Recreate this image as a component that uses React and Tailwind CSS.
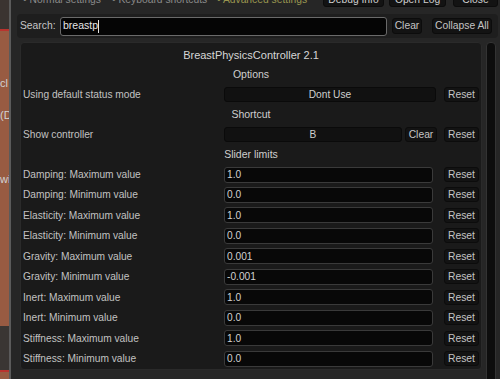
import React from "react";

const font = { fontFamily: '"Liberation Sans", Arial, sans-serif' };

const sliderRows = [
  ["Damping: Maximum value", "1.0"],
  ["Damping: Minimum value", "0.0"],
  ["Elasticity: Maximum value", "1.0"],
  ["Elasticity: Minimum value", "0.0"],
  ["Gravity: Maximum value", "0.001"],
  ["Gravity: Minimum value", "-0.001"],
  ["Inert: Maximum value", "1.0"],
  ["Inert: Minimum value", "0.0"],
  ["Stiffness: Maximum value", "1.0"],
  ["Stiffness: Minimum value", "0.0"],
];

function Btn({ children, className = "" }) {
  return (
    <div
      className={
        "flex items-center justify-center rounded-[3px] bg-[#131313] border border-[#0c0c0c] text-[#c4c4c4] text-[10.3px] whitespace-nowrap " +
        className
      }
    >
      {children}
    </div>
  );
}

function Heading({ children, h }) {
  return (
    <div className={"flex items-center justify-center text-[#cfcfcf] text-[10.5px] " + h}>
      {children}
    </div>
  );
}

export default function App() {
  return (
    <div className="w-[500px] h-[379px] flex overflow-hidden bg-[#232323]" style={font}>
      {/* background app peeking through on the left */}
      <div className="w-[9px] shrink-0 flex flex-col bg-[#985b42] overflow-hidden text-[11px] text-[#d2d2d2] leading-none">
        <div className="h-[29px] bg-[#3b3431]" />
        <div className="h-[2px] bg-[#b9332e]" />
        <div className="h-[47px]" />
        <div className="whitespace-nowrap">cl</div>
        <div className="h-[21px]" />
        <div className="whitespace-nowrap">(D</div>
        <div className="h-[53px]" />
        <div className="whitespace-nowrap">wi</div>
        <div className="flex-1" />
        <div className="h-[44px] bg-[#3a3633]" />
        <div className="h-[2px] bg-[#b9332e]" />
        <div className="h-[7px]" />
      </div>
      <div className="w-[2px] shrink-0 bg-[#5b5b5b]" />

      {/* settings window */}
      <div className="flex-1 flex flex-col bg-[#262626] min-w-0">
        {/* tabs row, cut off at the top */}
        <div className="h-[14px] flex items-start">
          <div className="-mt-[7px] flex items-center w-full text-[10.3px] leading-[14px] pl-[12px] pr-[2px]">
            <span className="text-[#8a8a8a] w-[89px] whitespace-nowrap">• Normal settings</span>
            <span className="text-[#8a8a8a] w-[105px] whitespace-nowrap">• Keyboard shortcuts</span>
            <span className="text-[#9a9650] whitespace-nowrap">• Advanced settings</span>
            <div className="flex-1" />
            <Btn className="w-[61px] h-[14px] mr-[5px] text-[#cfcfcf]">Debug Info</Btn>
            <Btn className="w-[57px] h-[14px] mr-[7px] text-[#cfcfcf]">Open Log</Btn>
            <Btn className="w-[45px] h-[14px] text-[#cfcfcf]">Close</Btn>
          </div>
        </div>

        {/* search row */}
        <div className="ml-[6px] mr-[2px] h-[24px] rounded-[4px] bg-[#1e1e1e] flex items-center pl-[3px] pr-[4px]">
          <span className="text-[#c6c6c6] text-[10.3px] w-[40px]">Search:</span>
          <div className="w-[327px] h-[19px] rounded-[3px] bg-[#050505] border border-[#6a6a6a] flex items-center pl-[2px] text-[10.5px] text-[#e6e6e6]">
            breastp<span className="w-px h-[13px] bg-[#e6e6e6]" />
          </div>
          <Btn className="ml-[5px] w-[30px] h-[16px]">Clear</Btn>
          <Btn className="ml-[10px] w-[60px] h-[16px]">Collapse All</Btn>
        </div>

        {/* content + scrollbar */}
        <div className="flex-1 flex pt-[4px] min-h-0">
          <div className="ml-[9px] w-[462px] h-[328px] rounded-[4px] bg-[#1a1a1a] border border-[#2a2a2a] flex flex-col pt-[2px] px-[2px] text-[10.2px] text-[#c2c2c2]">
            <div className="h-[20px] flex items-center justify-center text-[11px] text-[#d6d6d6]">
              BreastPhysicsController 2.1
            </div>
            <Heading h="h-[20px]">Options</Heading>
            <div className="h-[20px] flex items-center">
              <span className="w-[201px]">Using default status mode</span>
              <div className="w-[212px] h-[15px] rounded-[3px] bg-[#111111] border border-[#0a0a0a] flex items-center justify-center text-[#cfcfcf]">
                Dont Use
              </div>
              <Btn className="ml-[8px] w-[35px] h-[15px]">Reset</Btn>
            </div>
            <Heading h="h-[20px]">Shortcut</Heading>
            <div className="h-[21px] flex items-center">
              <span className="w-[201px]">Show controller</span>
              <div className="w-[178px] h-[15px] rounded-[3px] bg-[#111111] border border-[#0a0a0a] flex items-center justify-center text-[#cfcfcf]">
                B
              </div>
              <Btn className="ml-[3px] w-[32px] h-[15px]">Clear</Btn>
              <Btn className="ml-[7px] w-[35px] h-[15px]">Reset</Btn>
            </div>
            <Heading h="h-[19px]">Slider limits</Heading>
            {sliderRows.map(([label, value]) => (
              <div key={label} className="h-[20.6px] flex items-center">
                <span className="w-[201px]">{label}</span>
                <div className="w-[209px] h-[16px] rounded-[3px] bg-[#080808] border border-[#3a3a3a] flex items-center pl-[2px] text-[#d2d2d2]">
                  {value}
                </div>
                <Btn className="ml-[11px] w-[35px] h-[15px]">Reset</Btn>
              </div>
            ))}
          </div>
          <div className="ml-[4px] w-[10px] h-[340px] rounded-t-[4px] bg-[#0d0d0d] border border-[#333333]" />
        </div>
      </div>
    </div>
  );
}
